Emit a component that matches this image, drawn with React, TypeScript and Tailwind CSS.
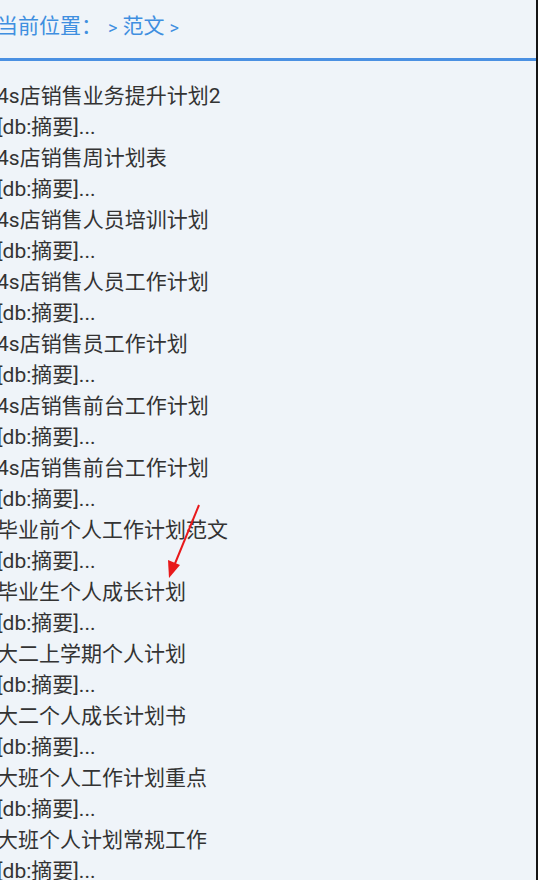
const items = [
  "4s店销售业务提升计划2",
  "4s店销售周计划表",
  "4s店销售人员培训计划",
  "4s店销售人员工作计划",
  "4s店销售员工作计划",
  "4s店销售前台工作计划",
  "4s店销售前台工作计划",
  "毕业前个人工作计划范文",
  "毕业生个人成长计划",
  "大二上学期个人计划",
  "大二个人成长计划书",
  "大班个人工作计划重点",
  "大班个人计划常规工作",
];

export default function App() {
  return (
    <div
      className="relative w-full h-[880px] overflow-hidden bg-[#eff4f9] border-r-2 border-[#151515]"
      style={{ fontFamily: "Roboto, 'Noto Sans CJK SC', sans-serif" }}
    >
      {/* breadcrumb */}
      <div className="h-[61px] border-b-[3px] border-[#4a90e2] flex items-center pb-[4px] -ml-[3px] text-[#3f8fe0]">
        <span className="text-[21px]">当前位置：</span>
        <span className="ml-[6px] text-[18px]">&gt;</span>
        <span className="ml-[5px] text-[21px]">范文</span>
        <span className="ml-[5px] text-[18px]">&gt;</span>
      </div>

      {/* list */}
      <ul className="pt-[20px] -ml-[3px] text-[21px] leading-[31px] text-[#333]">
        {items.map((t, i) => (
          <li key={i}>
            <a className="block">{t}</a>
            <p>[db:摘要]...</p>
          </li>
        ))}
      </ul>

      {/* red annotation arrow */}
      <svg className="absolute left-0 top-0 pointer-events-none" width="538" height="880">
        <line x1="199" y1="505" x2="174" y2="566" stroke="#e8191b" strokeWidth="2" />
        <polygon points="169,578 168,560 180,565" fill="#e8191b" />
      </svg>
    </div>
  );
}
